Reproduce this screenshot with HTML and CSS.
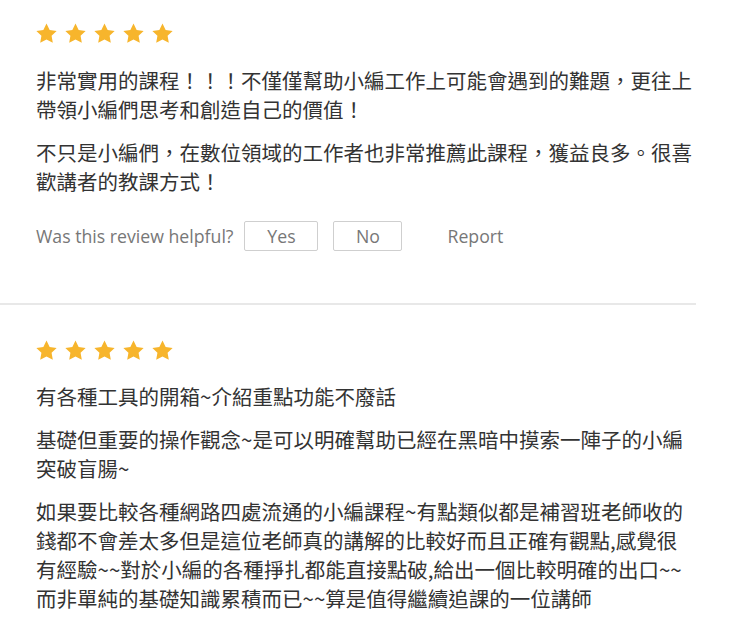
FILE: index.html
```html
<!DOCTYPE html>
<html lang="zh-Hant">
<head>
    <meta charset="UTF-8">
    <meta name="viewport" content="width=device-width, initial-scale=1.0">
    <title>課程評價</title>
    <link rel="stylesheet" href="styles.css">
</head>
<body>
    <div class="review-list">
        <div class="review first">
            <div class="stars">
                <svg class="star" viewBox="0 0 24 24"><path d="M12 .6l3.6 7.3 8 1.2-5.8 5.6 1.4 8L12 18.9l-7.2 3.8 1.4-8L.4 9.1l8-1.2z"/></svg>
                <svg class="star" viewBox="0 0 24 24"><path d="M12 .6l3.6 7.3 8 1.2-5.8 5.6 1.4 8L12 18.9l-7.2 3.8 1.4-8L.4 9.1l8-1.2z"/></svg>
                <svg class="star" viewBox="0 0 24 24"><path d="M12 .6l3.6 7.3 8 1.2-5.8 5.6 1.4 8L12 18.9l-7.2 3.8 1.4-8L.4 9.1l8-1.2z"/></svg>
                <svg class="star" viewBox="0 0 24 24"><path d="M12 .6l3.6 7.3 8 1.2-5.8 5.6 1.4 8L12 18.9l-7.2 3.8 1.4-8L.4 9.1l8-1.2z"/></svg>
                <svg class="star" viewBox="0 0 24 24"><path d="M12 .6l3.6 7.3 8 1.2-5.8 5.6 1.4 8L12 18.9l-7.2 3.8 1.4-8L.4 9.1l8-1.2z"/></svg>
            </div>
            <div class="review-body">
                <p>非常實用的課程！！！不僅僅幫助小編工作上可能會遇到的難題，更往上帶領小編們思考和創造自己的價值！</p>
                <p>不只是小編們，在數位領域的工作者也非常推薦此課程，獲益良多。很喜歡講者的教課方式！</p>
            </div>
            <div class="helpful">
                <span class="helpful-label">Was this review helpful?</span>
                <button class="vote-button yes">Yes</button>
                <button class="vote-button no">No</button>
                <a href="#" class="report-link">Report</a>
            </div>
        </div>

        <div class="review">
            <div class="stars">
                <svg class="star" viewBox="0 0 24 24"><path d="M12 .6l3.6 7.3 8 1.2-5.8 5.6 1.4 8L12 18.9l-7.2 3.8 1.4-8L.4 9.1l8-1.2z"/></svg>
                <svg class="star" viewBox="0 0 24 24"><path d="M12 .6l3.6 7.3 8 1.2-5.8 5.6 1.4 8L12 18.9l-7.2 3.8 1.4-8L.4 9.1l8-1.2z"/></svg>
                <svg class="star" viewBox="0 0 24 24"><path d="M12 .6l3.6 7.3 8 1.2-5.8 5.6 1.4 8L12 18.9l-7.2 3.8 1.4-8L.4 9.1l8-1.2z"/></svg>
                <svg class="star" viewBox="0 0 24 24"><path d="M12 .6l3.6 7.3 8 1.2-5.8 5.6 1.4 8L12 18.9l-7.2 3.8 1.4-8L.4 9.1l8-1.2z"/></svg>
                <svg class="star" viewBox="0 0 24 24"><path d="M12 .6l3.6 7.3 8 1.2-5.8 5.6 1.4 8L12 18.9l-7.2 3.8 1.4-8L.4 9.1l8-1.2z"/></svg>
            </div>
            <div class="review-body">
                <p>有各種工具的開箱~介紹重點功能不廢話</p>
                <p>基礎但重要的操作觀念~是可以明確幫助已經在黑暗中摸索一陣子的小編突破盲腸~</p>
                <p>如果要比較各種網路四處流通的小編課程~有點類似都是補習班老師收的錢都不會差太多但是這位老師真的講解的比較好而且正確有觀點,感覺很有經驗~~對於小編的各種掙扎都能直接點破,給出一個比較明確的出口~~而非單純的基礎知識累積而已~~算是值得繼續追課的一位講師</p>
            </div>
        </div>
    </div>
</body>
</html>
```

FILE: styles.css
```css
body {
    background-color: #ffffff;
    font-family: "Open Sans", "Noto Sans CJK TC", sans-serif;
    margin: 0;
    padding: 0;
}

.review-list {
    width: 696px;
}

.review {
    padding: 35px 0 52px 36px;
}

.review.first {
    padding-top: 23px;
    border-bottom: 2px solid #e8e8e8;
}

.stars {
    display: flex;
    gap: 8px;
    margin-bottom: 21px;
}

.review.first .stars {
    margin-bottom: 22px;
}

.star {
    width: 21px;
    height: 21px;
    fill: #f7b52c;
}

.review-body p {
    margin: 0 0 14px 0;
    font-family: "Noto Sans CJK TC", sans-serif;
    font-size: 20.5px;
    line-height: 29px;
    color: #333333;
}

.review-body p:last-child {
    margin-bottom: 0;
}

.helpful {
    display: flex;
    align-items: center;
    margin-top: 25px;
    color: #777777;
    font-size: 17.7px;
}

.helpful-label {
    margin-right: 11px;
}

.vote-button {
    height: 30px;
    padding: 0;
    background: #ffffff;
    border: 1px solid #cfcfcf;
    border-radius: 2px;
    font-family: "Open Sans", sans-serif;
    font-size: 17.7px;
    color: #777777;
}

.vote-button.yes {
    width: 74px;
    margin-right: 15px;
}

.vote-button.no {
    width: 69px;
    margin-right: 45px;
}

.report-link {
    color: #777777;
    text-decoration: none;
}
```
